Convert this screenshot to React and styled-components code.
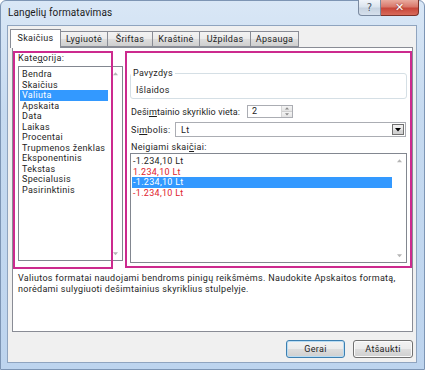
import React from 'react';
import styled, { createGlobalStyle } from 'styled-components';

const Global = createGlobalStyle`
  html, body { margin: 0; padding: 0; background: #fff; }
  body {
    width: 425px; height: 370px; overflow: hidden;
    font-family: Roboto, "Noto Sans", sans-serif;
    font-size: 9px; letter-spacing: 0.3px; color: #1e1e1e;
  }
  * { box-sizing: border-box; }
`;

const Window = styled.div`
  width: 425px; height: 370px;
  display: flex; flex-direction: column;
  background: linear-gradient(180deg, #d9e7f6 0%, #c6daf0 30%, #bdd4ee 100%);
  border: 1px solid #7d95b4;
  border-radius: 6px 6px 0 0;
`;

const TitleBar = styled.div`
  height: 24px; flex: none;
  display: flex; align-items: flex-start;
`;

const Title = styled.div`
  padding-left: 7px; line-height: 24px;
  font-size: 10px; letter-spacing: 0.1px; color: #1b1b1b;
`;

const Captions = styled.div`
  margin-left: auto; margin-right: 5px; margin-top: -1px;
  display: flex;
`;

const CaptionButton = styled.div`
  height: 16px;
  width: ${p => p.$w}px;
  display: flex; align-items: center; justify-content: center;
  border: 1px solid ${p => (p.$close ? '#7c3128' : '#7b8aa0')};
  border-top: none;
  border-left: ${p => (p.$close ? 'none' : undefined)};
  border-radius: ${p => (p.$close ? '0 0 4px 0' : '0 0 0 4px')};
  background: ${p => p.$close
    ? 'linear-gradient(180deg, #e9ab9f 0%, #d9786b 45%, #c8473a 55%, #d86a5a 100%)'
    : 'linear-gradient(180deg, #f1f5fa 0%, #dbe4ee 45%, #c7d3e1 55%, #d6e0ec 100%)'};
  color: ${p => (p.$close ? '#fff' : '#4a5566')};
  font-size: ${p => (p.$close ? '11px' : '10px')};
  font-weight: ${p => (p.$close ? 700 : 400)};
  font-family: "DejaVu Sans", sans-serif;
  letter-spacing: 0;
  text-shadow: ${p => (p.$close ? '0 0 2px #7a1c10' : 'none')};
`;

const Client = styled.div`
  flex: 1;
  margin: 0 7px 6px 6px;
  background: #f0f0f0;
  border: 1px solid #8fa4bf;
  padding: 3px 3px 4px 2px;
  display: flex; flex-direction: column;
`;

const TabStrip = styled.div`
  height: 18px; flex: none;
  display: flex; align-items: flex-end;
  position: relative; z-index: 1;
`;

const Tab = styled.div`
  height: ${p => (p.$active ? 19 : 16)}px;
  margin-bottom: ${p => (p.$active ? -1 : 0)}px;
  margin-left: ${p => (p.$first ? 0 : -1)}px;
  width: ${p => p.$w}px;
  display: flex; align-items: center; justify-content: center;
  border: 1px solid #898c95;
  border-bottom: ${p => (p.$active ? 'none' : '1px solid #898c95')};
  background: ${p => (p.$active ? '#fff' : 'linear-gradient(180deg, #f3f3f3 0%, #ebebeb 50%, #dddddd 51%, #cfcfcf 100%)')};
  z-index: ${p => (p.$active ? 2 : 0)};
  position: relative;
  padding-bottom: ${p => (p.$active ? 2 : 0)}px;
`;

const Panel = styled.div`
  position: relative;
  height: 285px; flex: none;
  margin-left: 2px;
  background: #fff;
  border: 1px solid #898c95;
  padding: 4px 5px 0 5px;
`;

const TopRow = styled.div`
  display: grid;
  grid-template-columns: 105px 1fr;
  column-gap: 7px;
  align-items: start;
`;

const Column = styled.div`
  display: flex; flex-direction: column;
  padding-top: ${p => p.$pt || 0}px;
`;

const Label = styled.div`
  line-height: 12px; height: 12px;
  padding-left: ${p => p.$pl || 0}px;
  margin-top: ${p => p.$mt || 0}px;
  white-space: nowrap;
  flex: none;
  width: ${p => (p.$w ? `${p.$w}px` : 'auto')};
  letter-spacing: ${p => (p.$tight ? '0.1px' : 'inherit')};
`;

const Key = styled.u`
  text-decoration: underline;
  text-underline-offset: 1px;
`;

const ListBox = styled.div`
  height: ${p => p.$h}px;
  margin-top: ${p => p.$mt || 0}px;
  border: 1px solid #828790;
  background: #fff;
  display: flex;
`;

const Items = styled.div`
  flex: 1;
  padding: 2px 1px;
  display: flex; flex-direction: column;
`;

const Item = styled.div`
  line-height: 10.5px; height: 10.5px;
  padding-left: ${p => p.$pl}px;
  white-space: nowrap;
  background: ${p => (p.$sel ? '#3399ff' : 'transparent')};
  color: ${p => (p.$sel ? '#fff' : p.$red ? '#e0232c' : '#1e1e1e')};
`;

const ScrollTrack = styled.div`
  width: 13px; flex: none;
  display: flex; flex-direction: column;
  justify-content: space-between; align-items: center;
  padding: 5px 0 4px;
`;

const Arrow = ({ down, color = '#b5b5b5', size = 5 }) => (
  <svg width={size} height={Math.ceil(size / 2) + 1} viewBox="0 0 6 4">
    {down
      ? <path d="M0 0 L6 0 L3 3.5 Z" fill={color} />
      : <path d="M0 3.5 L6 3.5 L3 0 Z" fill={color} />}
  </svg>
);

const Group = styled.fieldset`
  margin: 0; padding: 0; min-width: 0;
  border: 1px solid #d5dfe5;
  border-radius: 3px;
`;

const Legend = styled.legend`
  padding: 0 2px; margin-left: 0;
  line-height: 12px;
`;

const Sample = styled.div`
  padding: 5px 5px 2px;
  line-height: 12px;
`;

const FieldRow = styled.div`
  display: flex; align-items: center;
  height: ${p => p.$h}px;
  margin-top: ${p => p.$mt}px;
  padding-left: 1px;
  padding-right: 1px;
`;

const SpinBox = styled.div`
  width: 46px; height: 13px;
  border: 1px solid #abadb3;
  background: #fff;
  display: flex;
`;

const SpinValue = styled.div`
  flex: 1; padding-left: 4px; line-height: 11px;
`;

const SpinButtons = styled.div`
  width: 11px; display: flex; flex-direction: column;
  border-left: 1px solid #d6d6d6;
`;

const SpinHalf = styled.div`
  flex: 1; display: flex; align-items: center; justify-content: center;
  background: linear-gradient(180deg, #f4f4f4, #e4e4e4);
  border-bottom: ${p => (p.$top ? '1px solid #d0d0d0' : 'none')};
`;

const Combo = styled.div`
  flex: 1; height: 15px;
  border: 1px solid #abadb3;
  background: #fff;
  display: flex; align-items: center;
  padding: 0 1px 0 5px;
`;

const ComboText = styled.div` flex: 1; `;

const DropButton = styled.div`
  width: 12px; height: 11px;
  border: 1px solid #707070;
  background: linear-gradient(180deg, #f2f2f2 0%, #e6e6e6 50%, #d8d8d8 51%, #cfcfcf 100%);
  display: flex; align-items: center; justify-content: center;
`;

const Description = styled.div`
  margin-top: 10px;
  line-height: 11px;
  white-space: nowrap;
`;

const Highlight = styled.div`
  position: absolute;
  left: ${p => p.$l}px; top: ${p => p.$t}px;
  width: ${p => p.$w}px; height: ${p => p.$h}px;
  border: 2px solid #cc2a8e;
  pointer-events: none;
`;

const ButtonRow = styled.div`
  margin-top: 8px;
  display: flex; justify-content: flex-end; gap: 8px;
`;

const Button = styled.div`
  height: 18px;
  width: ${p => p.$w}px;
  display: flex; align-items: center; justify-content: center;
  border: 1px solid ${p => (p.$default ? '#3c7fb1' : '#707070')};
  border-radius: 3px;
  background: linear-gradient(180deg, #f2f2f2 0%, #ebebeb 50%, #dddddd 51%, #cfcfcf 100%);
  box-shadow: ${p => (p.$default ? 'inset 0 0 0 1px #b9dcf3' : 'inset 0 0 0 1px #fbfbfb')};
`;

const tabs = [
  ['Skaičius', 51], ['Lygiuotė', 48], ['Šriftas', 46], ['Kraštinė', 48], ['Užpildas', 52], ['Apsauga', 49],
];

const categories = ['Bendra', 'Skaičius', 'Valiuta', 'Apskaita', 'Data', 'Laikas', 'Procentai',
  'Trupmenos ženklas', 'Eksponentinis', 'Tekstas', 'Specialusis', 'Pasirinktinis'];

const negatives = [
  { t: '-1.234,10 Lt' },
  { t: '1.234,10 Lt', red: true },
  { t: '-1.234,10 Lt', sel: true },
  { t: '-1.234,10 Lt', red: true },
];

export default function App() {
  return (
    <>
      <Global />
      <Window>
        <TitleBar>
          <Title>Langelių formatavimas</Title>
          <Captions>
            <CaptionButton $w={23}>?</CaptionButton>
            <CaptionButton $w={38} $close>✕</CaptionButton>
          </Captions>
        </TitleBar>
        <Client>
          <TabStrip>
            {tabs.map(([t, w], i) => (
              <Tab key={t} $w={w} $first={i === 0} $active={i === 0}>{t}</Tab>
            ))}
          </TabStrip>
          <Panel>
            <TopRow>
              <Column>
                <Label>Kate<Key>g</Key>orija:</Label>
                <ListBox $h={195} $mt={2}>
                  <Items>
                    {categories.map((c, i) => (
                      <Item key={c} $pl={2} $sel={i === 2}>{c}</Item>
                    ))}
                  </Items>
                  <ScrollTrack>
                    <Arrow />
                    <Arrow down />
                  </ScrollTrack>
                </ListBox>
              </Column>
              <Column $pt={15}>
                <Group>
                  <Legend>Pavyzdys</Legend>
                  <Sample>Išlaidos</Sample>
                </Group>
                <FieldRow $h={13} $mt={6}>
                  <Label $w={116} $tight>Deši<Key>m</Key>tainio skyriklio vieta:</Label>
                  <SpinBox>
                    <SpinValue>2</SpinValue>
                    <SpinButtons>
                      <SpinHalf $top><Arrow size={4} color="#8a8a8a" /></SpinHalf>
                      <SpinHalf><Arrow size={4} down color="#8a8a8a" /></SpinHalf>
                    </SpinButtons>
                  </SpinBox>
                </FieldRow>
                <FieldRow $h={15} $mt={4}>
                  <Label $w={44}>Si<Key>m</Key>bolis:</Label>
                  <Combo>
                    <ComboText>Lt</ComboText>
                    <DropButton><Arrow size={6} down color="#000" /></DropButton>
                  </Combo>
                </FieldRow>
                <Label $mt={4} $pl={1}>Neigiami skai<Key>č</Key>iai:</Label>
                <ListBox $h={110}>
                  <Items>
                    {negatives.map((n, i) => (
                      <Item key={i} $pl={1} $sel={n.sel} $red={n.red}>{n.t}</Item>
                    ))}
                  </Items>
                  <ScrollTrack>
                    <Arrow />
                    <Arrow down />
                  </ScrollTrack>
                </ListBox>
              </Column>
            </TopRow>
            <Description>
              Valiutos formatai naudojami bendroms pinigų reikšmėms. Naudokite Apskaitos formatą,<br />
              norėdami sulygiuoti dešimtainius skyriklius stulpelyje.
            </Description>
            <Highlight $l={0} $t={3} $w={100} $h={218} />
            <Highlight $l={112} $t={3} $w={287} $h={217} />
          </Panel>
          <ButtonRow>
            <Button $w={59} $default>Gerai</Button>
            <Button $w={60}>Atšaukti</Button>
          </ButtonRow>
        </Client>
      </Window>
    </>
  );
}
